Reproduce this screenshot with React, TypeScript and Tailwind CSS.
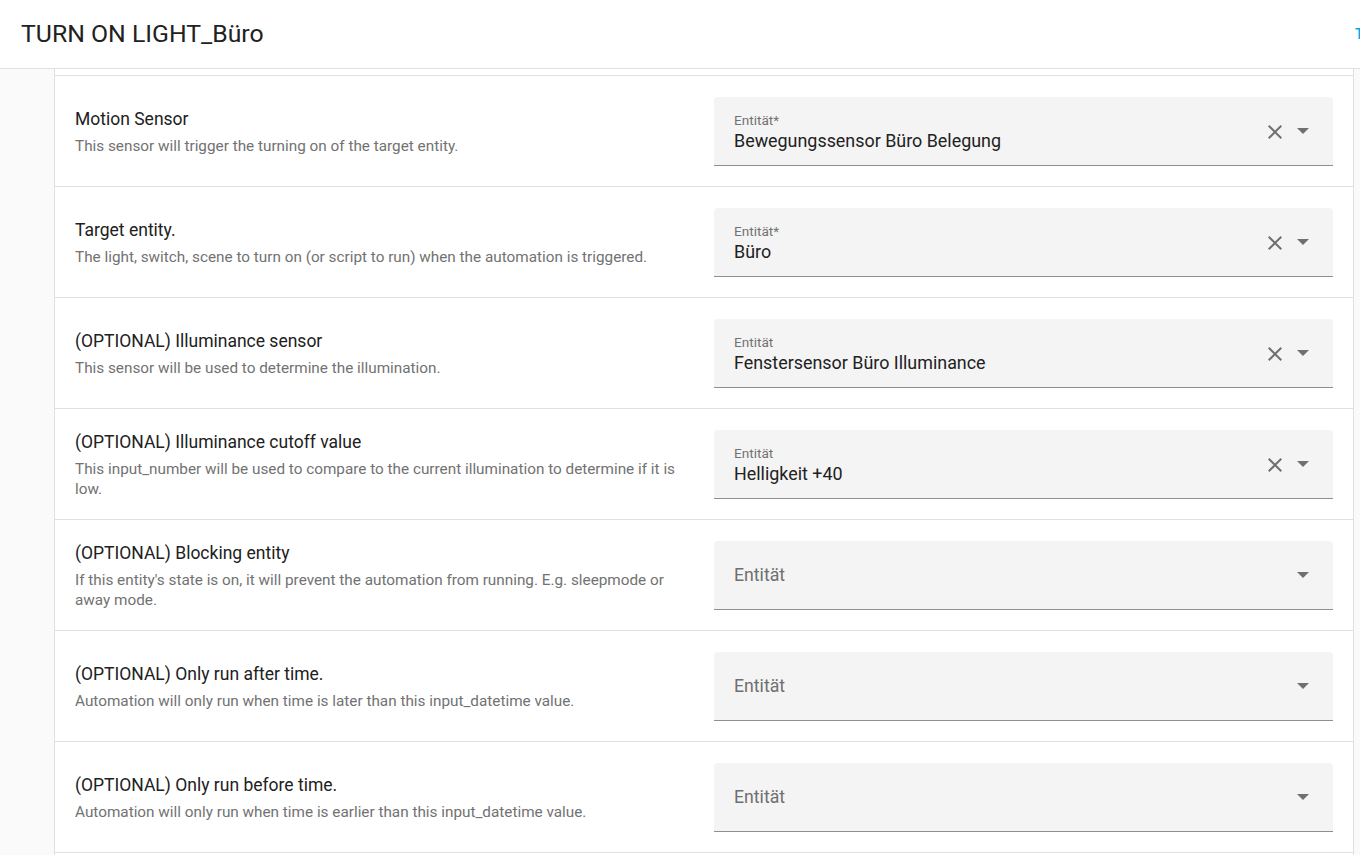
import React from 'react'

type Row = {
  title: string
  desc: string
  label: string
  value?: string
}

const rows: Row[] = [
  {
    title: 'Motion Sensor',
    desc: 'This sensor will trigger the turning on of the target entity.',
    label: 'Entität*',
    value: 'Bewegungssensor Büro Belegung',
  },
  {
    title: 'Target entity.',
    desc: 'The light, switch, scene to turn on (or script to run) when the automation is triggered.',
    label: 'Entität*',
    value: 'Büro',
  },
  {
    title: '(OPTIONAL) Illuminance sensor',
    desc: 'This sensor will be used to determine the illumination.',
    label: 'Entität',
    value: 'Fenstersensor Büro Illuminance',
  },
  {
    title: '(OPTIONAL) Illuminance cutoff value',
    desc: 'This input_number will be used to compare to the current illumination to determine if it is low.',
    label: 'Entität',
    value: 'Helligkeit +40',
  },
  {
    title: '(OPTIONAL) Blocking entity',
    desc: "If this entity's state is on, it will prevent the automation from running. E.g. sleepmode or away mode.",
    label: 'Entität',
  },
  {
    title: '(OPTIONAL) Only run after time.',
    desc: 'Automation will only run when time is later than this input_datetime value.',
    label: 'Entität',
  },
  {
    title: '(OPTIONAL) Only run before time.',
    desc: 'Automation will only run when time is earlier than this input_datetime value.',
    label: 'Entität',
  },
]

function CloseIcon() {
  return (
    <svg viewBox="0 0 24 24" className="h-6 w-6 fill-[#707070]">
      <path d="M19,6.41L17.59,5L12,10.59L6.41,5L5,6.41L10.59,12L5,17.59L6.41,19L12,13.41L17.59,19L19,17.59L13.41,12L19,6.41Z" />
    </svg>
  )
}

function ArrowDown() {
  return (
    <svg viewBox="0 0 12 6" className="h-[6px] w-[12px] fill-[#707070]">
      <path d="M0,0L6,6L12,0Z" />
    </svg>
  )
}

function EntityField({ label, value }: { label: string; value?: string }) {
  return (
    <div className="flex h-[69px] items-center rounded-t-[4px] border-b border-[#8f8f8f] bg-[#f4f4f4] pl-5 pr-6">
      {value ? (
        <div className="flex h-full flex-1 flex-col pt-4">
          <span className="text-[13.6px] leading-[14px] text-[#727272]">{label}</span>
          <span className="mt-[2px] text-[17.9px] leading-6 text-[#212121]">{value}</span>
        </div>
      ) : (
        <div className="flex-1 text-[17.7px] leading-6 text-[#6f6f6f]">{label}</div>
      )}
      {value && (
        <div className="mr-[10px] mt-[2px]">
          <CloseIcon />
        </div>
      )}
      <div className="mt-[-1px]">
        <ArrowDown />
      </div>
    </div>
  )
}

export default function App() {
  return (
    <div
      className="h-[855px] overflow-hidden bg-[#fafafa]"
      style={{ fontFamily: 'Roboto, "Noto Sans", sans-serif' }}
    >
      <header className="flex h-[69px] items-center justify-between overflow-hidden border-b border-[#e0e0e0] bg-white">
        <h1 className="pl-[21px] text-[24.8px] font-normal text-[#212121]">TURN ON LIGHT_Büro</h1>
        <span className="w-[5px] overflow-hidden text-[14px] font-medium text-[#03a9f4]">T</span>
      </header>

      <div className="ml-[54px] w-[1300px] border-x border-[#e0e0e0] bg-white pt-[6px]">
        {rows.map((row) => (
          <div key={row.title} className="grid grid-cols-2 gap-5 border-t border-[#e0e0e0] px-5 pb-5 pt-[21px]">
            <div className="flex flex-col justify-center">
              <div className="text-[17.5px] leading-6 text-[#212121]">{row.title}</div>
              <div className="mt-[5px] text-[15.3px] leading-5 text-[#727272]">{row.desc}</div>
            </div>
            <EntityField label={row.label} value={row.value} />
          </div>
        ))}
        <div className="h-10 border-t border-[#e0e0e0]" />
      </div>
    </div>
  )
}
